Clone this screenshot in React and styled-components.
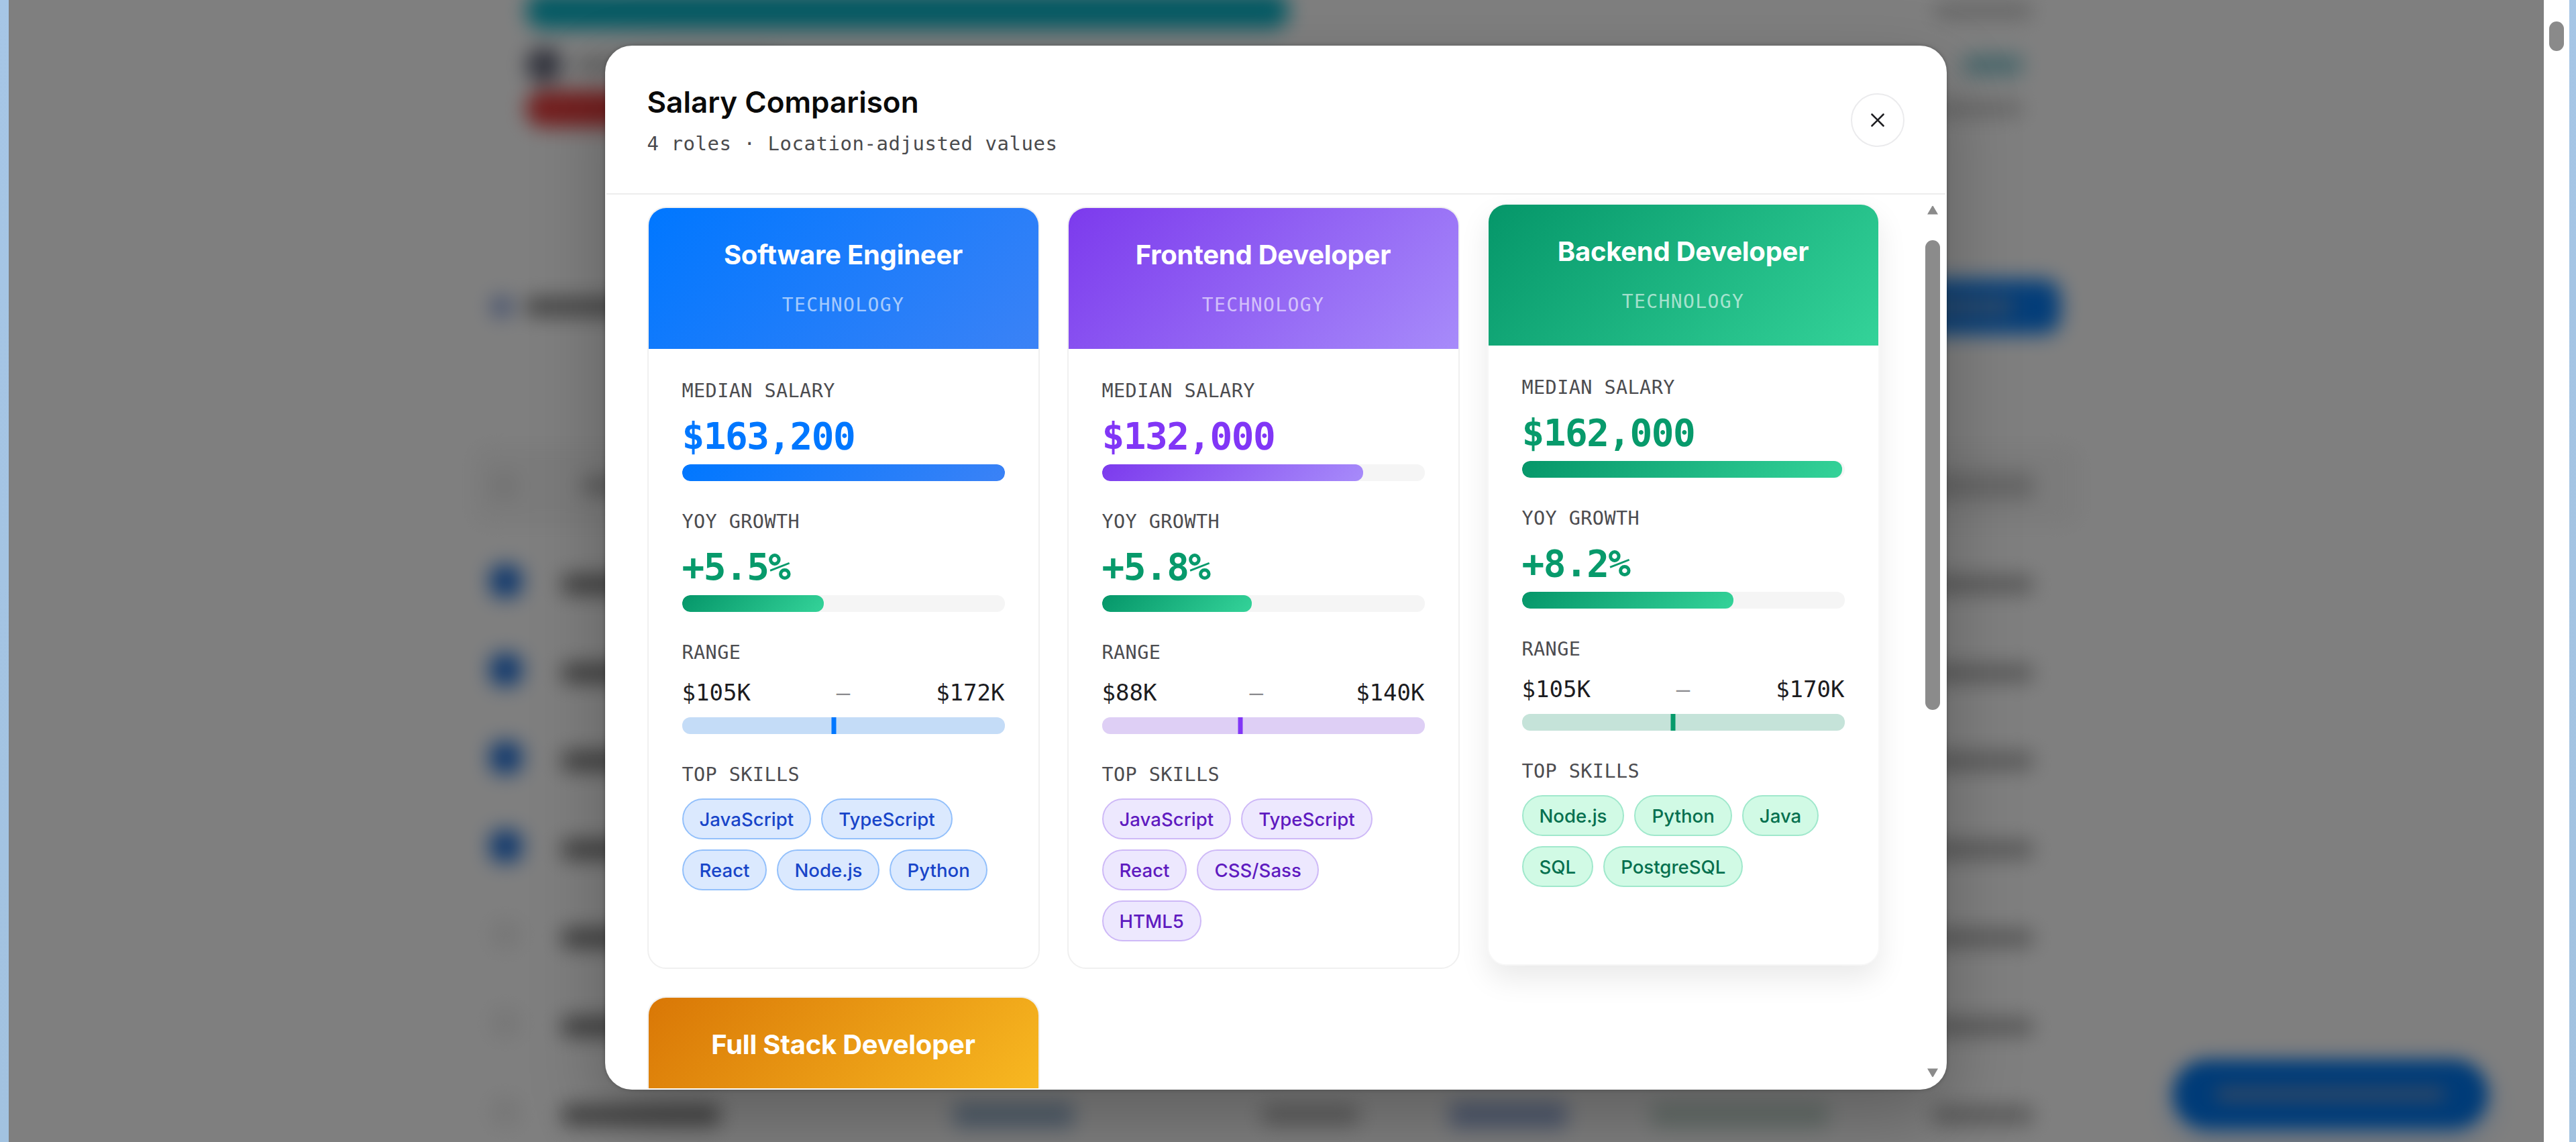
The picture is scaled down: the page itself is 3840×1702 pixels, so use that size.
import React from "react";
import styled, { createGlobalStyle } from "styled-components";

const SANS = `Inter, "Liberation Sans", sans-serif`;
const MONO = `"DejaVu Sans Mono", "Liberation Mono", monospace`;

const GREEN = "linear-gradient(135deg, #059669 0%, #34d399 100%)";

const roles = [
  {
    title: "Software Engineer",
    salary: "$163,200",
    salaryFill: 100,
    growth: "+5.5%",
    growthFill: 44,
    low: "$105K",
    high: "$172K",
    marker: 47.1,
    accent: "#0077ff",
    gradient: "linear-gradient(135deg, #0077ff 0%, #3b82f6 100%)",
    pill: { bg: "#dbe9fe", line: "#93c0fb", text: "#1845c9" },
    skills: ["JavaScript", "TypeScript", "React", "Node.js", "Python"],
  },
  {
    title: "Frontend Developer",
    salary: "$132,000",
    salaryFill: 80.9,
    growth: "+5.8%",
    growthFill: 46.4,
    low: "$88K",
    high: "$140K",
    marker: 43,
    accent: "#8136f6",
    gradient: "linear-gradient(135deg, #7c3aed 0%, #a78bfa 100%)",
    pill: { bg: "#ede8fe", line: "#ceb9f7", text: "#5f1bc0" },
    skills: ["JavaScript", "TypeScript", "React", "CSS/Sass", "HTML5"],
  },
  {
    title: "Backend Developer",
    salary: "$162,000",
    salaryFill: 99.3,
    growth: "+8.2%",
    growthFill: 65.6,
    low: "$105K",
    high: "$170K",
    marker: 46.8,
    accent: "#079a6b",
    gradient: GREEN,
    pill: { bg: "#d1fae5", line: "#a0e8cc", text: "#06704f" },
    skills: ["Node.js", "Python", "Java", "SQL", "PostgreSQL"],
    raised: true,
  },
  {
    title: "Full Stack Developer",
    gradient: "linear-gradient(135deg, #d97706 0%, #fbbf24 100%)",
  },
];

const GlobalStyle = createGlobalStyle`
  *, *::before, *::after { box-sizing: border-box; }
  body { margin: 0; background: #a3c3e1; overflow: hidden; }
`;

const Desktop = styled.div`
  display: grid;
  grid-template-columns: 13px 1fr 38px 10px;
  width: 100vw;
  height: 1702px;
  background: linear-gradient(180deg, #a6c6e6 0%, #a2c2e0 100%);
`;

const Viewport = styled.div`
  grid-column: 2;
  position: relative;
  overflow: hidden;
  background: #ffffff;
`;

const WindowScrollbar = styled.div`
  grid-column: 3;
  display: flex;
  justify-content: center;
  padding-top: 32px;
  background: #ffffff;
  &::before {
    content: "";
    width: 22px;
    height: 44px;
    border-radius: 11px;
    background: #8a8a8a;
  }
`;

/* Page behind the dialog */

const Page = styled.div`
  display: flex;
  flex-direction: column;
  width: 2400px;
  height: 1760px;
  margin: 0 auto;
  filter: blur(15px);
`;

const ChartPanel = styled.div`
  display: flex;
  flex-direction: column;
  height: 400px;
  padding: 0 74px 0 81px;
`;

const ChartRow = styled.div`
  display: flex;
  align-items: center;
  justify-content: space-between;
  height: ${(p) => p.$h}px;
  padding-right: ${(p) => p.$inset || 0}px;
`;

const ChartBar = styled.div`
  width: ${(p) => p.$w}px;
  height: 54px;
  border-radius: 26px;
  background: ${(p) => p.$color};
`;

const Cluster = styled.div`
  display: flex;
  align-items: center;
  gap: 20px;
`;

const Dot = styled.div`
  width: ${(p) => p.$size}px;
  height: ${(p) => p.$size}px;
  border-radius: ${(p) => p.$radius || "50%"};
  background: ${(p) => p.$color};
`;

const Smear = styled.div`
  width: ${(p) => p.$w}px;
  height: ${(p) => p.$h || 24}px;
  border-radius: 8px;
  background: ${(p) => p.$color || "#9a9a9a"};
`;

const Toolbar = styled.div`
  display: flex;
  align-items: center;
  justify-content: space-between;
  height: 114px;
  padding: 0 31px 0 29px;
`;

const ToolbarButton = styled.div`
  display: flex;
  align-items: center;
  justify-content: center;
  width: 360px;
  height: 82px;
  border-radius: 26px;
  background: #077bf2;
`;

const TableHead = styled.div`
  display: grid;
  grid-template-columns: 138px 1fr 160px;
  align-items: center;
  height: 124px;
  margin: 148px 0 14px;
  padding: 0 60px 0 27px;
  border-radius: 24px;
  background: #f7f7f7;
`;

const TableRow = styled.div`
  display: grid;
  grid-template-columns: 108px 583px 460px 280px 300px 420px 160px;
  align-items: center;
  height: 131.8px;
  padding: 10px 32px 0 27px;
`;

const Checkbox = styled.div`
  width: 48px;
  height: 48px;
  margin-bottom: 10px;
  border-radius: 18px;
  background: ${(p) => (p.$checked ? "#1f70da" : "#f0f0f0")};
`;

const FloatingButton = styled.div`
  position: absolute;
  right: 83px;
  bottom: 19px;
  display: flex;
  align-items: center;
  justify-content: center;
  width: 470px;
  height: 104px;
  border-radius: 52px;
  background: #0077f0;
  box-shadow: 0 14px 40px rgba(0, 119, 255, 0.25);
  filter: blur(13px);
`;

/* Dialog */

const Overlay = styled.div`
  position: absolute;
  inset: 0;
  display: flex;
  align-items: flex-start;
  justify-content: center;
  padding: 68px 2px 0 0;
  background: rgba(0, 0, 0, 0.5);
`;

const Dialog = styled.section`
  display: flex;
  flex-direction: column;
  width: 2000px;
  height: 1556px;
  border: 2px solid #fdfdfd;
  border-radius: 40px;
  overflow: hidden;
  background: #ffffff;
  box-shadow: 0 44px 110px rgba(0, 0, 0, 0.26), 0 0 6px rgba(0, 0, 0, 0.25);
  font-family: ${SANS};
`;

const DialogHeader = styled.header`
  display: flex;
  flex: none;
  align-items: center;
  justify-content: space-between;
  height: 220px;
  padding: 0 61px 1px 61px;
  border-bottom: 2px solid #ededed;
`;

const Heading = styled.div`
  display: flex;
  flex-direction: column;
  gap: 17px;
`;

const Title = styled.h2`
  margin: 0;
  font-size: 44px;
  line-height: 54px;
  font-weight: 600;
  color: #0a0a0a;
`;

const Subtitle = styled.p`
  margin: 0;
  font-family: ${MONO};
  font-size: 29px;
  line-height: 36px;
  letter-spacing: 0.54px;
  color: #4a4a4d;
`;

const CloseButton = styled.button`
  display: flex;
  align-items: center;
  justify-content: center;
  width: 80px;
  height: 80px;
  padding: 0;
  border: 2px solid #ebebed;
  border-radius: 50%;
  background: #ffffff;
  color: #1f1f22;
`;

const DialogBody = styled.div`
  display: flex;
  flex: 1;
  min-height: 0;
`;

const ScrollArea = styled.div`
  flex: 1;
  min-width: 0;
  overflow: hidden;
  padding: 18px 61px 0;
`;

const Scrollbar = styled.div`
  display: flex;
  flex: none;
  flex-direction: column;
  align-items: center;
  width: 38px;
  padding: 16px 0 16px;
`;

const Thumb = styled.div`
  width: 22px;
  height: 700px;
  margin-top: 38px;
  margin-bottom: auto;
  border-radius: 11px;
  background: #8b8b8b;
`;

const CardGrid = styled.div`
  display: grid;
  grid-template-columns: repeat(3, 585px);
  gap: 41px;
`;

const Card = styled.article`
  display: flex;
  flex-direction: column;
  border: 2px solid ${(p) => (p.$raised ? "#f7f7f7" : "#f0f0f0")};
  border-radius: 28px;
  overflow: hidden;
  background: #ffffff;
  transform: ${(p) => (p.$raised ? "translateY(-5px)" : "none")};
  box-shadow: ${(p) => (p.$raised ? "0 20px 44px rgba(0, 0, 0, 0.085)" : "none")};
`;

const CardHeader = styled.div`
  display: flex;
  flex-direction: column;
  align-items: center;
  gap: 33px;
  height: 210px;
  padding-top: 46px;
  background: ${(p) => p.$gradient};
`;

const RoleTitle = styled.h3`
  margin: 0;
  font-size: 40px;
  line-height: 48px;
  font-weight: 700;
  letter-spacing: -0.25px;
  color: #ffffff;
  white-space: nowrap;
`;

const Category = styled.span`
  font-family: ${MONO};
  font-size: 28px;
  line-height: 36px;
  letter-spacing: 1.4px;
  color: rgba(255, 255, 255, 0.62);
`;

const CardBody = styled.div`
  display: flex;
  flex-direction: column;
  gap: 43px;
  padding: 45px 50px 39px;
`;

const Metric = styled.div`
  display: flex;
  flex-direction: column;
`;

const Label = styled.span`
  margin-bottom: 17px;
  font-family: ${MONO};
  font-size: 28.5px;
  line-height: 36px;
  letter-spacing: 0.4px;
  color: #4c4c50;
`;

const Value = styled.span`
  margin-bottom: 10px;
  font-family: ${MONO};
  font-size: 56px;
  line-height: 64px;
  font-weight: 700;
  letter-spacing: -1.5px;
  color: ${(p) => p.$color};
`;

const Track = styled.div`
  height: 25px;
  border-radius: 12px;
  overflow: hidden;
  background: #f5f5f5;
`;

const Fill = styled.div`
  width: ${(p) => p.$value}%;
  height: 100%;
  border-radius: 12px;
  background: ${(p) => p.$gradient};
`;

const RangeRow = styled.div`
  display: flex;
  justify-content: space-between;
  margin: 4px 0 17px;
  font-family: ${MONO};
  font-size: 34px;
  line-height: 40px;
  color: #1c1c1f;
`;

const Dash = styled.span`
  color: #8a8a8e;
`;

const RangeTrack = styled.div`
  position: relative;
  height: 25px;
  border-radius: 12px;
  overflow: hidden;
  background: #f5f5f5;
  &::before {
    content: "";
    display: block;
    height: 100%;
    background: ${(p) => p.$color};
    opacity: 0.2;
  }
`;

const Marker = styled.div`
  position: absolute;
  top: 0;
  left: ${(p) => p.$at}%;
  width: 7px;
  height: 100%;
  transform: translateX(-50%);
  background: ${(p) => p.$color};
`;

const Skills = styled.div`
  display: flex;
  flex-wrap: wrap;
  gap: 15px;
`;

const Skill = styled.span`
  height: 61px;
  padding: 0 24px;
  border: 2px solid ${(p) => p.$tone.line};
  border-radius: 31px;
  background: ${(p) => p.$tone.bg};
  color: ${(p) => p.$tone.text};
  font-size: 27.6px;
  line-height: 59px;
  font-weight: 500;
  white-space: nowrap;
`;

function Arrow({ down }) {
  return (
    <svg width="18" height="14" viewBox="0 0 18 14" aria-hidden="true">
      <path
        d={down ? "M1 0.5H17L10 12.5Q9 14 8 12.5Z" : "M1 13.5H17L10 1.5Q9 0 8 1.5Z"}
        fill="#8b8b8b"
      />
    </svg>
  );
}

function RoleDetails({ role }) {
  return (
    <CardBody>
      <Metric>
        <Label>MEDIAN SALARY</Label>
        <Value $color={role.accent}>{role.salary}</Value>
        <Track>
          <Fill $value={role.salaryFill} $gradient={role.gradient} />
        </Track>
      </Metric>
      <Metric>
        <Label>YOY GROWTH</Label>
        <Value $color="#079a6b">{role.growth}</Value>
        <Track>
          <Fill $value={role.growthFill} $gradient={GREEN} />
        </Track>
      </Metric>
      <Metric>
        <Label>RANGE</Label>
        <RangeRow>
          <span>{role.low}</span>
          <Dash>–</Dash>
          <span>{role.high}</span>
        </RangeRow>
        <RangeTrack $color={role.accent}>
          <Marker $at={role.marker} $color={role.accent} />
        </RangeTrack>
      </Metric>
      <Metric>
        <Label>TOP SKILLS</Label>
        <Skills>
          {role.skills.map((skill) => (
            <Skill key={skill} $tone={role.pill}>
              {skill}
            </Skill>
          ))}
        </Skills>
      </Metric>
    </CardBody>
  );
}

function RoleCard({ role }) {
  return (
    <Card $raised={role.raised}>
      <CardHeader $gradient={role.gradient}>
        <RoleTitle>{role.title}</RoleTitle>
        {role.skills && <Category>TECHNOLOGY</Category>}
      </CardHeader>
      {role.skills && <RoleDetails role={role} />}
    </Card>
  );
}

function BackgroundPage() {
  return (
    <Page>
      <ChartPanel>
        <ChartRow $h={32}>
          <ChartBar $w={1138} $color="#08b4c8" />
          <Smear $w={145} $color="#cccccc" />
        </ChartRow>
        <ChartRow $h={130} $inset={14}>
          <Cluster>
            <Dot $size={54} $color="#66697c" />
            <Smear $w={300} $color="#c0c0c0" />
          </Cluster>
          <Smear $w={88} $h={30} $color="#8fcdd6" />
        </ChartRow>
        <ChartRow $h={0} $inset={14}>
          <ChartBar $w={800} $color="#e83c3c" />
          <Smear $w={130} $color="#cfcfcf" />
        </ChartRow>
      </ChartPanel>
      <Toolbar>
        <Cluster>
          <Dot $size={32} $color="#86a0dc" />
          <Smear $w={420} $h={28} $color="#8c8c8c" />
        </Cluster>
        <ToolbarButton>
          <Smear $w={220} $h={22} $color="#6d9bd0" />
        </ToolbarButton>
      </Toolbar>
      <TableHead>
        <Dot $size={44} $radius="14px" $color="#e8e8e8" />
        <Smear $w={180} $color="#b0b0b0" />
        <Smear $w={150} $h={40} $color="#cccccc" />
      </TableHead>
      {[1, 1, 1, 1, 0, 0, 0].map((checked, i) => (
        <TableRow key={i}>
          <Checkbox $checked={checked} />
          <Smear $w={235} $h={30} $color="#828282" />
          <Smear $w={180} $h={36} $color="#9fbad6" />
          <Smear $w={145} $h={26} $color="#b4b4b4" />
          <Smear $w={175} $h={38} $color="#9db2dc" />
          <Smear $w={265} $h={36} $color="#cadcd4" />
          <Smear $w={150} $h={28} $color="#b4b4b4" />
        </TableRow>
      ))}
    </Page>
  );
}

export default function App() {
  return (
    <>
      <GlobalStyle />
      <Desktop>
        <Viewport>
          <BackgroundPage />
          <FloatingButton>
            <Smear $w={340} $h={22} $color="#5a8fd0" />
          </FloatingButton>
          <Overlay>
            <Dialog role="dialog" aria-label="Salary Comparison">
              <DialogHeader>
                <Heading>
                  <Title>Salary Comparison</Title>
                  <Subtitle>4 roles · Location-adjusted values</Subtitle>
                </Heading>
                <CloseButton aria-label="Close">
                  <svg width="22" height="22" viewBox="0 0 22 22" fill="none">
                    <path
                      d="M2.5 2.5L19.5 19.5M19.5 2.5L2.5 19.5"
                      stroke="currentColor"
                      strokeWidth="2.6"
                      strokeLinecap="round"
                    />
                  </svg>
                </CloseButton>
              </DialogHeader>
              <DialogBody>
                <ScrollArea>
                  <CardGrid>
                    {roles.map((role) => (
                      <RoleCard key={role.title} role={role} />
                    ))}
                  </CardGrid>
                </ScrollArea>
                <Scrollbar>
                  <Arrow />
                  <Thumb />
                  <Arrow down />
                </Scrollbar>
              </DialogBody>
            </Dialog>
          </Overlay>
        </Viewport>
        <WindowScrollbar />
      </Desktop>
    </>
  );
}
